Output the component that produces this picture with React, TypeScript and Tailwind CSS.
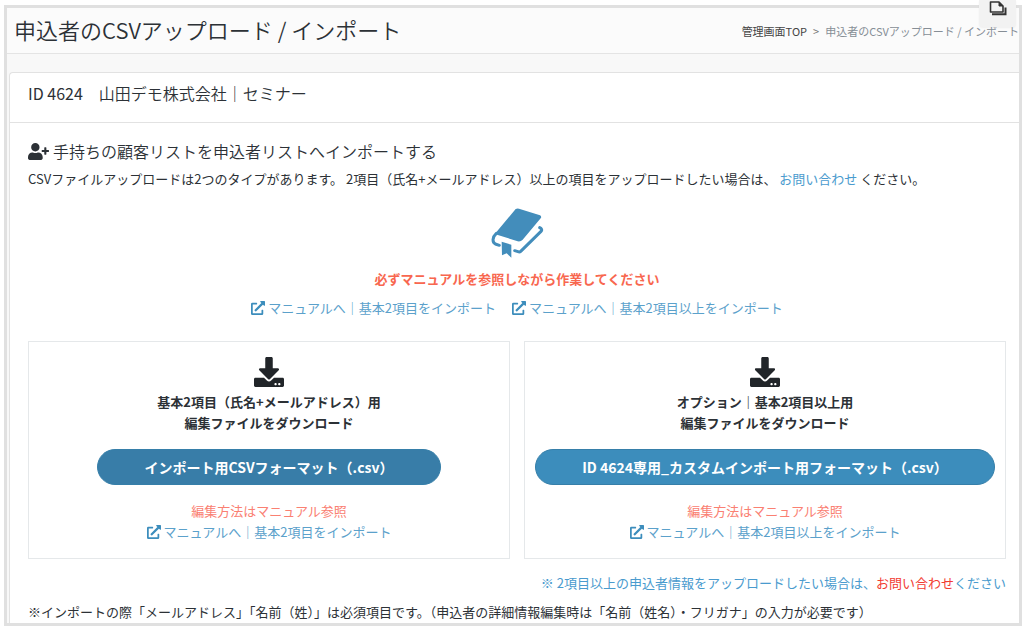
import type { ReactNode } from "react";
import { FaDownload, FaExternalLinkAlt, FaUserPlus } from "react-icons/fa";

function BookIcon() {
  return (
    <svg viewBox="30 22 162 156" className="h-[52px] w-[54px] text-[#438dbb]" aria-hidden="true">
      <path
        fill="currentColor"
        d="M107 28Q112 25 117 27L180 47Q186 50 182 56L128 120Q122 127 113 125L51 105Q45 102 50 96Z"
      />
      <path
        fill="none"
        stroke="currentColor"
        strokeWidth="9"
        strokeLinecap="round"
        strokeLinejoin="round"
        d="M49 101C37 112 36 128 46 133L58 137M104 153L114 156Q119 158 122 155L183 95Q187 91 183 86L179 84"
      />
      <path fill="currentColor" d="M65 126L94 135V174L80 161L66 167Z" />
    </svg>
  );
}

function PagesIcon() {
  return (
    <svg viewBox="0 0 18 15" className="h-[15px] w-[18px]" fill="none" stroke="#333" aria-hidden="true">
      <path strokeWidth="1.6" strokeLinejoin="round" d="M1.500 1H10L14 5V11H1.500Z" />
      <path fill="#333" d="M10 1V5H14Z" />
      <path strokeWidth="2" d="M3 13.200H16.500V6.500" />
    </svg>
  );
}

function ManualLink({ children }: { children: ReactNode }) {
  return (
    <a href="#manual" className="inline-flex items-center gap-[3px] text-[#5ba1cb]">
      <FaExternalLinkAlt className="size-[14px] text-[#3c8dbc]" />
      {children}
    </a>
  );
}

type DownloadPanelProps = {
  title: string;
  button: string;
  buttonColor: string;
  manual: string;
};

function DownloadPanel({ title, button, buttonColor, manual }: DownloadPanelProps) {
  return (
    <div className="flex flex-1 flex-col items-center border border-[#e5e8ea] pt-[15px] pb-4 text-center leading-[21px]">
      <FaDownload className="size-[30px] text-[#212529]" />
      <p className="mt-1 font-bold">
        {title}
        <br />
        編集ファイルをダウンロード
      </p>
      <button
        type="button"
        className={`mt-4 h-9 rounded-full border border-[#367fa9] px-[46px] text-[14px] font-bold text-white ${buttonColor}`}
      >
        {button}
      </button>
      <p className="mt-[15px] text-[#fa8072]">編集方法はマニュアル参照</p>
      <ManualLink>{manual}</ManualLink>
    </div>
  );
}

export default function App() {
  return (
    <div className="relative bg-white pt-[5px] pr-[2px] pb-[3px] pl-1 font-['Noto_Sans_CJK_JP',sans-serif] text-[13px] leading-[22px] text-[#2c3136]">
      <div className="overflow-hidden border-[3px] border-[#e0e0e0] bg-[#f8f8f8]">
        <header className="flex items-center justify-between border-b border-[#e4e4e4] bg-[#fbfbfb] pl-[7px]">
          <h1 className="pb-[3px] text-[22px] leading-[42px] font-[350] whitespace-nowrap">
            申込者のCSVアップロード / インポート
          </h1>
          <nav className="flex gap-1.5 text-[11px] whitespace-nowrap" aria-label="breadcrumb">
            <a href="#top" className="text-[#444]">
              管理画面TOP
            </a>
            <span className="text-[#777]">&gt;</span>
            <span className="text-[#868e96]">申込者のCSVアップロード / インポート</span>
          </nav>
        </header>

        <main className="mt-[18px] ml-[2px] rounded-tl border-t border-l border-[#e2e2e2] bg-white">
          <h2 className="border-b border-[#e2e2e2] px-[18px] pt-2 pb-[17px] text-[16px] leading-6 font-[350]">
            <span className="font-normal">ID 4624</span>　山田デモ株式会社｜セミナー
          </h2>

          <div className="pt-4 pr-[13px] pl-[18px]">
            <h3 className="flex items-center gap-1 text-[16px] leading-6 font-[350]">
              <FaUserPlus className="size-[21px]" />
              手持ちの顧客リストを申込者リストへインポートする
            </h3>
            <p className="mt-[5px]">
              CSVファイルアップロードは2つのタイプがあります。 2項目（氏名+メールアドレス）以上の項目をアップロードしたい場合は、{" "}
              <a href="#contact" className="text-[#4a9bce]">
                お問い合わせ
              </a>{" "}
              ください。
            </p>

            <div className="mt-[17px] flex flex-col items-center">
              <BookIcon />
              <p className="mt-[9px] font-bold text-[#f8674f]">必ずマニュアルを参照しながら作業してください</p>
              <div className="mt-[7px] flex gap-4">
                <ManualLink>マニュアルへ｜基本2項目をインポート</ManualLink>
                <ManualLink>マニュアルへ｜基本2項目以上をインポート</ManualLink>
              </div>
            </div>

            <div className="mt-[22px] flex gap-[14px]">
              <DownloadPanel
                title="基本2項目（氏名+メールアドレス）用"
                button="インポート用CSVフォーマット（.csv）"
                buttonColor="bg-[#387da8]"
                manual="マニュアルへ｜基本2項目をインポート"
              />
              <DownloadPanel
                title="オプション｜基本2項目以上用"
                button="ID 4624専用_カスタムインポート用フォーマット（.csv）"
                buttonColor="bg-[#3c8dbc]"
                manual="マニュアルへ｜基本2項目以上をインポート"
              />
            </div>

            <p className="mt-[13px] text-right text-[#4a9bce]">
              ※ 2項目以上の申込者情報をアップロードしたい場合は、
              <a href="#contact" className="text-[#f23c32]">
                お問い合わせ
              </a>
              ください
            </p>
            <p className="mt-[7px]">
              ※インポートの際「メールアドレス」「名前（姓）」は必須項目です。（申込者の詳細情報編集時は「名前（姓名）・フリガナ」の入力が必要です）
            </p>
          </div>
        </main>
      </div>

      <button
        type="button"
        aria-label="copy"
        className="absolute top-0 right-2 flex h-[27px] w-[37px] justify-center rounded-b bg-[#f2f2f2] pt-[1px] shadow-xs"
      >
        <PagesIcon />
      </button>
    </div>
  );
}
